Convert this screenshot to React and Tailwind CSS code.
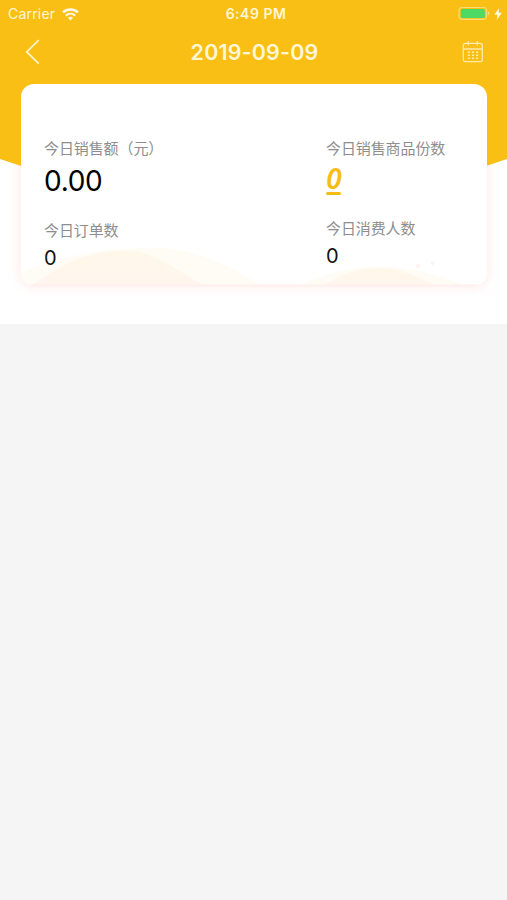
import React from 'react';

const LATIN = "font-['Inter','Liberation_Sans',sans-serif]";

function StatusBar() {
  return (
    <div className="grid h-[28px] grid-cols-[1fr_auto_1fr] items-center pl-[8px] pr-[5px] text-[#fff6d6]">
      <div className="flex items-center gap-[7px]">
        <span className="text-[14px] leading-[28px] tracking-[0.2px]">Carrier</span>
        <svg className="h-[13px] w-[17px]" viewBox="0 0 17 13" fill="none" stroke="#fffbe8">
          <path d="M1 4.4C5.2 .6 11.8 .6 16 4.4" strokeWidth="2.4" />
          <path d="M3.8 7.6C6.5 5.1 10.5 5.1 13.2 7.6" strokeWidth="2.2" />
          <path d="M8.5 12.4L5.9 9.8C7.3 8.5 9.7 8.5 11.1 9.8Z" fill="#fffbe8" stroke="none" />
        </svg>
      </div>
      <span className="ml-[2px] text-[14px] font-semibold leading-[28px] tracking-[0.5px]">6:49 PM</span>
      <div className="flex items-center justify-end gap-[4px]">
        <svg className="h-[14px] w-[32px]" viewBox="0 0 32 14">
          <rect x="1" y=".4" width="27.5" height="12" rx="3.2" fill="none" stroke="#fbdc76" strokeWidth="1.2" />
          <rect x="2.8" y="2.1" width="24" height="8.8" rx="1.5" fill="#4cd964" />
          <path d="M30 4.3C32 5.1 32 7.7 30 8.5Z" fill="#fbdc76" />
        </svg>
        <svg className="h-[12px] w-[8px]" viewBox="0 0 8 12">
          <path d="M5 0L.4 6.8H3.6L2.7 12L7.8 4.8H4.5Z" fill="#fffbe8" />
        </svg>
      </div>
    </div>
  );
}

function NavBar() {
  return (
    <div className="grid h-[56px] grid-cols-[1fr_auto_1fr] items-start pl-[25px] pr-[23px]">
      <svg className="mt-[11px] h-[26px] w-[15px]" viewBox="0 0 15 26" fill="none" stroke="#fff4cc" strokeWidth="1.7">
        <path d="M13.7 1.2L1.7 12.9L13.7 24.6" />
      </svg>
      <span className="mt-[9px] text-[21.5px] font-semibold leading-[30px] tracking-[0.15px] text-[#fff6d6]">2019-09-09</span>
      <svg className="ml-auto mt-[13px] h-[22px] w-[22px]" viewBox="0 0 22 22" fill="none" stroke="#fee9a6" strokeWidth="1.3">
        <rect x="1.3" y="2.3" width="19" height="18.4" rx="2.2" />
        <path d="M1.3 8H20.3M6.3 0V4.5M15.3 0V4.5" />
        <path d="M5.8 11.3H16.4M5.8 14.3H16.4M5.8 17.3H16.4" strokeDasharray="2.2 1.9" strokeWidth="1.5" />
      </svg>
    </div>
  );
}

function Stat({ label, children }) {
  return (
    <div className="flex flex-col">
      <span className="whitespace-nowrap font-['Noto_Sans_CJK_SC',sans-serif] text-[15px] leading-[22px] tracking-[-0.1px] text-[#8e8e8e]">{label}</span>
      {children}
    </div>
  );
}

function SummaryCard() {
  return (
    <div className="relative ml-[21px] mr-[20px] h-[202px] overflow-hidden rounded-[13px] bg-white">
      <svg className="absolute inset-0 h-full w-full" viewBox="0 0 466 202" preserveAspectRatio="none">
        <defs>
          <linearGradient id="hill" x1="0" y1="0" x2="0" y2="1">
            <stop stopColor="#fff8e9" />
            <stop offset="1" stopColor="#fff5ee" />
          </linearGradient>
        </defs>
        <path d="M0 202V188C55 168 88 164 132 164C174 164 210 182 241 202Z" fill="#fffcf6" />
        <path d="M10 202C45 177 68 167 105 167C134 167 153 185 184 202Z" fill="url(#hill)" />
        <path d="M275 202C313 187 331 183 361 183C392 183 415 191 446 202Z" fill="#fffbf5" />
        <path d="M302 202C325 187 342 184 359 184C378 184 398 193 416 202Z" fill="url(#hill)" />
        <circle cx="397" cy="182" r="2.4" fill="#fff3f1" />
        <circle cx="411.5" cy="179" r="2" fill="#f6f6f2" />
        <path d="M0 201.3H466" stroke="#ffefed" strokeWidth="1.6" />
      </svg>
      <div className="relative grid grid-cols-[282px_1fr] pl-[23px] pt-[53px]">
        <div className="flex flex-col">
          <Stat label="今日销售额（元）">
            <span className="mt-[5px] text-[28px] leading-[34px] tracking-[-0.3px] text-black">0.00</span>
          </Stat>
          <div className="mt-[21px]">
            <Stat label="今日订单数">
              <span className="mt-[5px] text-[20px] leading-[24px] text-[#111]">0</span>
            </Stat>
          </div>
        </div>
        <div className="flex flex-col">
          <Stat label="今日销售商品份数">
            <span className="mt-[4px] flex h-[34px] w-[16px] flex-col items-center text-[#f8bd14]">
              <span className="font-['Noto_Sans',sans-serif] text-[28px] font-semibold italic leading-[30px]">0</span>
              <span className="-ml-[2px] -mt-[1px] h-[3px] w-[15px] shrink-0 rounded-full bg-[#f8bd14]" />
            </span>
          </Stat>
          <div className="mt-[20px]">
            <Stat label="今日消费人数">
              <span className="mt-[5px] text-[20px] leading-[24px] text-[#111]">0</span>
            </Stat>
          </div>
        </div>
      </div>
    </div>
  );
}

export default function App() {
  return (
    <div className={`min-h-[900px] w-[507px] bg-[#f5f5f5] ${LATIN}`}>
      <div className="relative h-[324px] bg-white">
        <div className="absolute left-[21px] top-[84px] h-[202px] w-[466px] rounded-[13px] shadow-[0_0_8px_3px_rgba(255,228,224,0.5)]" />
        <svg className="absolute left-0 top-0 h-[190px] w-[507px]" viewBox="0 0 507 190">
          <path d="M0 0H507V159L480 168H27L0 159Z" fill="#f9bf14" />
        </svg>
        <div className="relative">
          <StatusBar />
          <NavBar />
          <SummaryCard />
        </div>
      </div>
    </div>
  );
}
